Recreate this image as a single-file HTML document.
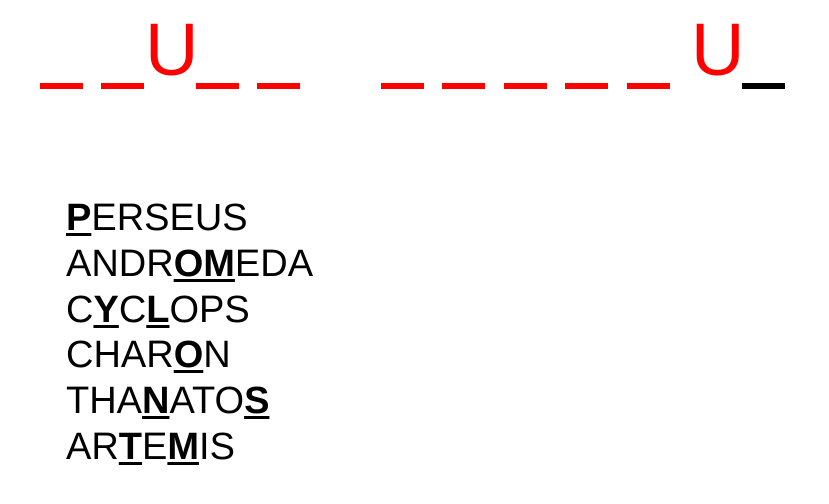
<!DOCTYPE html>
<html><head><style>
body{margin:0;width:829px;height:504px;background:#fff;position:relative;overflow:hidden;font-family:"Liberation Sans",Arial,sans-serif}
.d{position:absolute;top:83px;width:43px;height:6px;background:#f00}
.u{position:absolute;top:10px;font-size:74px;color:#f00;line-height:80px}
.w{position:absolute;left:66px;top:196px;font-size:38px;line-height:45.8px;color:#000}
b{text-decoration:underline;text-decoration-thickness:3px;text-underline-offset:3px}
</style></head><body>
<div class="d" style="left:40px"></div>
<div class="d" style="left:101px"></div>
<div class="u" style="left:145px">U</div>
<div class="d" style="left:196px"></div>
<div class="d" style="left:257px"></div>
<div class="d" style="left:381px"></div>
<div class="d" style="left:442px"></div>
<div class="d" style="left:504px"></div>
<div class="d" style="left:565px"></div>
<div class="d" style="left:627px"></div>
<div class="u" style="left:691px">U</div>
<div class="d" style="left:742px;background:#000"></div>
<div class="w">
<div><b>P</b>ERSEUS</div>
<div>ANDR<b>OM</b>EDA</div>
<div>C<b>Y</b>C<b>L</b>OPS</div>
<div>CHAR<b>O</b>N</div>
<div>THA<b>N</b>ATO<b>S</b></div>
<div>AR<b>T</b>E<b>M</b>IS</div>
</div>
</body></html>
